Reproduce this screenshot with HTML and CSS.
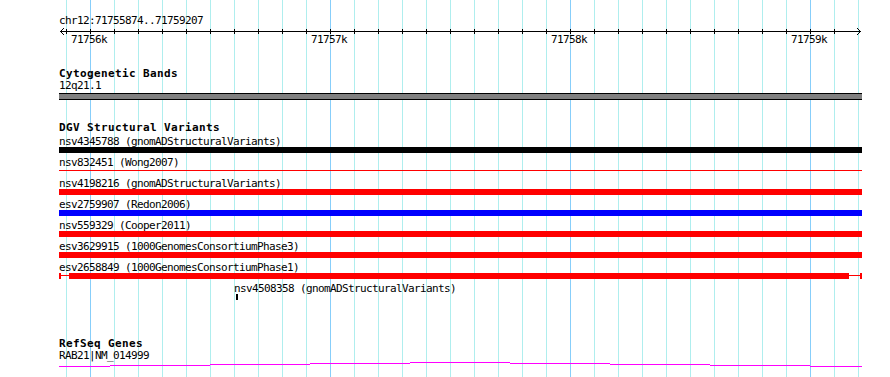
FILE: index.html
```html
<!DOCTYPE html>
<html lang="en">
<head>
    <meta charset="UTF-8">
    <title>chr12:71755874..71759207</title>
    <link rel="stylesheet" href="styles.css">
</head>
<body>
    <div class="page">
        <!-- position ruler -->
        <div class="ruler">
            <div class="ref-label">chr12:71755874..71759207</div>
            <svg class="axis" width="803" height="7" viewBox="0 0 803 7" shape-rendering="crispEdges">
                <path d="M1 3.5H802" stroke="#000" stroke-width="1"/>
                <path id="ticks" stroke="#000" stroke-width="1" d=""/>
                <path d="M5 0L1.5 3.5L5 7" fill="none" stroke="#000" stroke-width="1" shape-rendering="auto"/>
                <path d="M798 0L801.5 3.5L798 7" fill="none" stroke="#000" stroke-width="1" shape-rendering="auto"/>
            </svg>
            <div class="tick-labels">
                <span>71756k</span>
                <span>71757k</span>
                <span>71758k</span>
                <span>71759k</span>
            </div>
        </div>

        <section class="track cyto">
            <h2 class="track-title">Cytogenetic Bands</h2>
            <div class="feat-label">12q21.1</div>
            <div class="band"></div>
        </section>

        <section class="track dgv">
            <h2 class="track-title">DGV Structural Variants</h2>
            <div class="feature">
                <div class="feat-label">nsv4345788 (gnomADStructuralVariants)</div>
                <div class="bar bar-black"></div>
            </div>
            <div class="feature">
                <div class="feat-label">nsv832451 (Wong2007)</div>
                <div class="bar bar-thin"></div>
            </div>
            <div class="feature">
                <div class="feat-label">nsv4198216 (gnomADStructuralVariants)</div>
                <div class="bar bar-red"></div>
            </div>
            <div class="feature">
                <div class="feat-label">esv2759907 (Redon2006)</div>
                <div class="bar bar-blue"></div>
            </div>
            <div class="feature">
                <div class="feat-label">nsv559329 (Cooper2011)</div>
                <div class="bar bar-red"></div>
            </div>
            <div class="feature">
                <div class="feat-label">esv3629915 (1000GenomesConsortiumPhase3)</div>
                <div class="bar bar-red"></div>
            </div>
            <div class="feature">
                <div class="feat-label">esv2658849 (1000GenomesConsortiumPhase1)</div>
                <svg class="bar-svg" width="803" height="6" viewBox="0 0 803 6" shape-rendering="crispEdges">
                    <rect x="0" y="0" width="2" height="6" fill="#f00"/>
                    <path d="M2 2.5H10M790 2.5H801" stroke="#f00" stroke-width="1"/>
                    <rect x="10" y="0" width="780" height="6" fill="#f00"/>
                    <rect x="801" y="0" width="2" height="6" fill="#f00"/>
                </svg>
            </div>
            <div class="feature feature-small">
                <div class="feat-label">nsv4508358 (gnomADStructuralVariants)</div>
                <div class="mark"></div>
            </div>
        </section>

        <section class="track refseq">
            <h2 class="track-title">RefSeq Genes</h2>
            <div class="feat-label">RAB21|NM_014999</div>
            <svg class="gene" width="803" height="5" viewBox="0 0 803 5" shape-rendering="crispEdges">
                <path d="M0 4.5H51M51 3.5H151M151 2.5H251M251 1.5H351M351 0.5H451M451 1.5H551M551 2.5H651M651 3.5H751M751 4.5H803" fill="none" stroke="#f0f" stroke-width="1"/>
            </svg>
        </section>
    </div>

    <script>
        // Striche auf der Achse, alle 24px
        let d = '';
        for (let i = 0; i <= 32; i++) {
            const x = 7 + i * 24 + 0.5;
            d += 'M' + x + ' 1V6';
        }
        document.getElementById('ticks').setAttribute('d', d);
    </script>
</body>
</html>
```

FILE: styles.css
```css
* {
    margin: 0;
    padding: 0;
    box-sizing: border-box;
}

body {
    font-family: 'DejaVu Sans Mono', 'Liberation Mono', monospace;
    font-size: 11px;
    line-height: 11px;
    color: #000;
    background: #fff;
}

.page {
    width: 890px;
    height: 377px;
    overflow: hidden;
    padding: 15px 0 0 59px;
    background-color: #fff;
    background-image:
        linear-gradient(to right, #fff 66px, transparent 66px, transparent 859px, #fff 859px),
        linear-gradient(to right, #87cefa 1px, transparent 1px),
        linear-gradient(to right, #afeeee 1px, transparent 1px);
    background-size: 100% 100%, 240px 100%, 24px 100%;
    background-position: 0 0, 90px 0, 66px 0;
}

.ref-label,
.feat-label,
.tick-labels span {
    letter-spacing: -0.62px;
    white-space: nowrap;
    height: 13px;
}

.axis {
    display: block;
}

.tick-labels {
    display: flex;
    gap: 204px;
    padding-left: 12px;
    margin-top: -1px;
    height: 13px;
}

.track-title {
    font-size: 11px;
    font-weight: bold;
    letter-spacing: 0.38px;
    line-height: 11px;
    height: 13px;
    white-space: nowrap;
}

.cyto {
    margin-top: 21px;
}

.cyto .track-title {
    margin-bottom: -1px;
}

.band {
    width: 803px;
    height: 7px;
    background: #808080;
    border-top: 1px solid #000;
    border-bottom: 1px solid #000;
}

.dgv {
    margin-top: 22px;
}

.dgv .track-title {
    margin-bottom: 1px;
}

.feature {
    height: 21px;
}

.feature .feat-label {
    height: 11px;
}

.bar {
    width: 803px;
    height: 6px;
}

.bar-black {
    background: #000;
}

.bar-red {
    background: #f00;
}

.bar-blue {
    background: #00f;
}

.bar-thin {
    display: flex;
    align-items: center;
}

.bar-thin::before {
    content: '';
    display: block;
    width: 100%;
    height: 1px;
    margin-top: -1px;
    background: #f00;
}

.bar-svg {
    display: block;
}

.feature-small {
    padding-left: 175px;
}

.mark {
    width: 2px;
    height: 6px;
    margin-left: 2px;
    background: #000;
}

.refseq {
    margin-top: 34px;
}

.refseq .track-title {
    margin-bottom: -1px;
}

.gene {
    display: block;
    margin-top: -1px;
}
```
